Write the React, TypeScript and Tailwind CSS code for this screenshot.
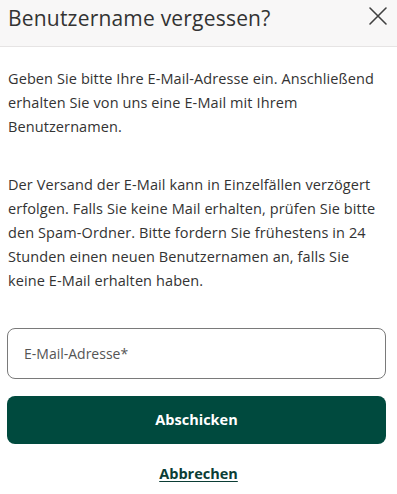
import React from "react";

export default function App() {
  return (
    <div className="w-[397px] h-[494px] bg-white overflow-hidden text-[#333333]" style={{ fontFamily: '"Open Sans", sans-serif' }}>
      <div className="h-[47px] bg-[#f8f7f7] border-b border-[#e6e4e4] flex items-start justify-between pl-2 pr-[9px]">
        <h2 className="text-[21px] tracking-[0.2px] leading-none text-[#333333] mt-[8px]">Benutzername vergessen?</h2>
        <button className="mt-[6px] text-[#444]" aria-label="close">
          <svg width="20" height="20" viewBox="0 0 20 20">
            <path d="M2 2 L18 18 M18 2 L2 18" stroke="#404040" strokeWidth="1.6" strokeLinecap="round" />
          </svg>
        </button>
      </div>
      <div className="px-2 pt-5">
        <p className="text-[14.5px] leading-6 w-[374px] tracking-[0.1px]">
          Geben Sie bitte Ihre E-Mail-Adresse ein. Anschließend erhalten Sie von uns eine E-Mail mit Ihrem Benutzernamen.
        </p>
        <p className="text-[14.5px] leading-6 mt-[34px] w-[374px] tracking-[0.1px]">
          Der Versand der E-Mail kann in Einzelfällen verzögert erfolgen. Falls Sie keine Mail erhalten, prüfen Sie bitte den Spam-Ordner. Bitte fordern Sie frühestens in 24 Stunden einen neuen Benutzernamen an, falls Sie keine E-Mail erhalten haben.
        </p>
        <div className="mt-[35px] h-[51px] mr-[3px] -ml-[1px] border border-[#7a7a7a] rounded-lg flex items-center px-4 text-[14px] text-[#555]">
          E-Mail-Adresse*
        </div>
        <button className="mt-[17px] w-[379px] -ml-[1px] h-[48px] rounded-lg bg-[#004a3e] text-white font-bold text-[14.5px]">
          Abschicken
        </button>
        <div className="mt-[17px] text-center">
          <a className="text-[14.5px] font-bold text-[#0b3d35] underline underline-offset-2">Abbrechen</a>
        </div>
      </div>
    </div>
  );
}
